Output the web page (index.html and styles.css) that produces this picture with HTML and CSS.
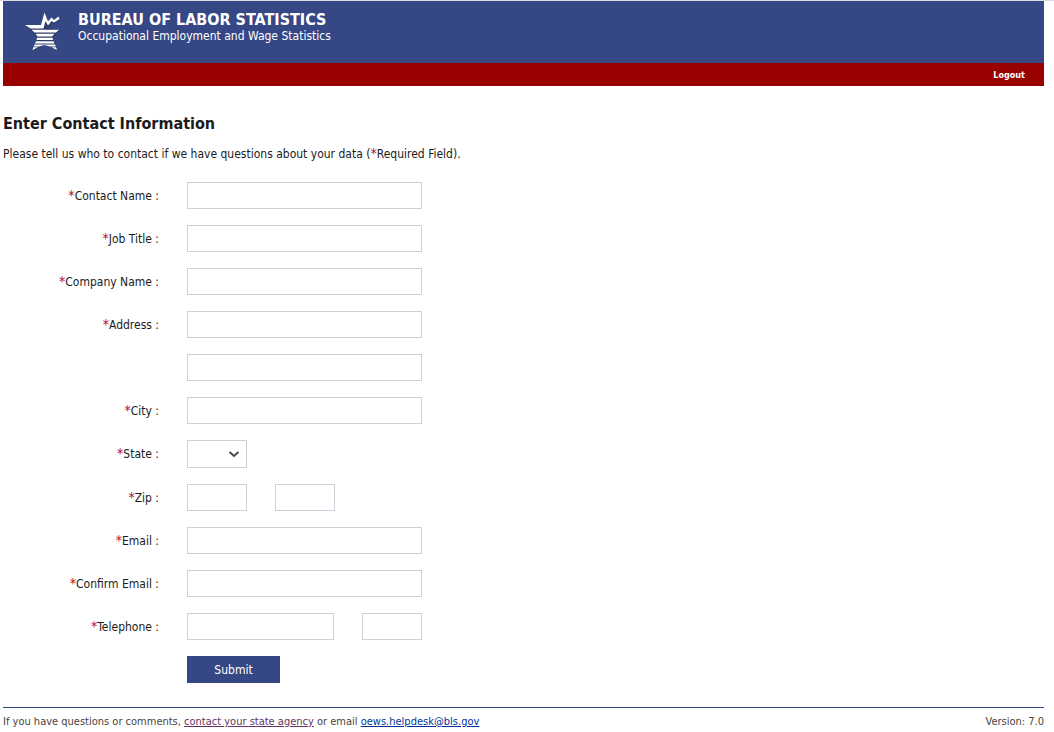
FILE: index.html
```html
<!DOCTYPE html>
<html lang="en">
<head>
  <meta charset="UTF-8">
  <title>Enter Contact Information</title>
  <link rel="stylesheet" href="styles.css">
</head>
<body>
  <header>
    <div class="banner">
      <svg class="logo" width="54" height="54" viewBox="0 0 54 54" aria-hidden="true">
        <path class="shadow" d="M10 22H26L29.500 10L33 19L36.500 15L39 18L44 14L38 20L35.500 19L33 24L44 27L36 34L42 47L30 40L18 47L21.500 34Z"/>
        <path class="star" d="M9 21H25L28.500 8.500L32 17.500L35.500 13.500L38 16L42.500 12.500L43.500 15L38 18.500L35.500 17L32 21.500L29.500 17L27.500 24.500H14.500Z"/>
        <path class="star" d="M15.500 25.800H43L40 28.500H18.500ZM19.500 29.800H38.500L36 32.500H21.500ZM21 33.800H36.500L37 36H20.500ZM20 37.200H37.500L38.500 39.500H19ZM18.500 40.500H39L39.800 42.500H34L28.500 41L23 42.500H17.800ZM17.300 43.200H22L16.500 46ZM35.500 43.200H40L41 46Z"/>
      </svg>
      <div class="brand">
        <div class="agency">BUREAU OF LABOR STATISTICS</div>
        <div class="program">Occupational Employment and Wage Statistics</div>
      </div>
    </div>
    <nav>
      <a href="#">Logout</a>
    </nav>
  </header>

  <main>
    <h1>Enter Contact Information</h1>
    <p class="intro">Please tell us who to contact if we have questions about your data (<span class="req">*</span>Required Field).</p>

    <form>
      <div class="row">
        <label for="contact"><span class="req">*</span>Contact Name :</label>
        <input type="text" id="contact">
      </div>
      <div class="row">
        <label for="job"><span class="req">*</span>Job Title :</label>
        <input type="text" id="job">
      </div>
      <div class="row">
        <label for="company"><span class="req">*</span>Company Name :</label>
        <input type="text" id="company">
      </div>
      <div class="row">
        <label for="address1"><span class="req">*</span>Address :</label>
        <input type="text" id="address1">
      </div>
      <div class="row">
        <span class="spacer"></span>
        <input type="text" id="address2" aria-label="Address line 2">
      </div>
      <div class="row">
        <label for="city"><span class="req">*</span>City :</label>
        <input type="text" id="city">
      </div>
      <div class="row">
        <label for="state"><span class="req">*</span>State :</label>
        <div class="select-wrap">
          <select id="state" class="short"><option></option></select>
          <svg class="arrow" width="12" height="8" viewBox="0 0 12 8" aria-hidden="true"><path d="M1.500 2L6 6L10.500 2"/></svg>
        </div>
      </div>
      <div class="row">
        <label for="zip"><span class="req">*</span>Zip :</label>
        <input type="text" id="zip" class="short">
        <input type="text" id="zip4" class="short" aria-label="Zip plus 4">
      </div>
      <div class="row">
        <label for="email"><span class="req">*</span>Email :</label>
        <input type="email" id="email">
      </div>
      <div class="row">
        <label for="email2"><span class="req">*</span>Confirm Email :</label>
        <input type="email" id="email2">
      </div>
      <div class="row">
        <label for="phone"><span class="req">*</span>Telephone :</label>
        <input type="tel" id="phone" class="medium">
        <input type="text" id="ext" class="short" aria-label="Extension">
      </div>
      <div class="row">
        <span class="spacer"></span>
        <button type="submit">Submit</button>
      </div>
    </form>
  </main>

  <footer>
    <div>If you have questions or comments, <a class="visited" href="#">contact your state agency</a> or email <a href="mailto:oews.helpdesk@bls.gov">oews.helpdesk@bls.gov</a></div>
    <div>Version: 7.0</div>
  </footer>
</body>
</html>
```
FILE: styles.css
```css
html {
  border-top: 1px solid #dadce0;
}

body {
  margin: 0 10px 0 3px;
  font-family: Tahoma, "DejaVu Sans Condensed", "Noto Sans", sans-serif;
  font-size: 12px;
  line-height: 16px;
  color: #1b1b1b;
  background-color: white;
}

.banner {
  display: flex;
  height: 62px;
  padding-left: 13px;
  box-sizing: border-box;
  background-color: #364785;
  color: white;
}

.logo {
  margin-top: 3px;
}

.star {
  fill: white;
}

.shadow {
  fill: #2b3658;
  opacity: 0.6;
}

.brand {
  padding: 11px 0 0 8px;
}

.agency {
  font-size: 16px;
  font-weight: bold;
}

nav {
  display: flex;
  justify-content: flex-end;
  align-items: center;
  height: 23px;
  padding-right: 19px;
  background-color: #990000;
}

nav a {
  color: white;
  font-size: 9px;
  font-weight: bold;
  text-decoration: none;
}

h1 {
  margin: 28px 0 12px;
  font-size: 16px;
  line-height: 20px;
}

.intro {
  margin: 0 0 20px;
}

.req {
  color: #b50920;
  font-size: 14px;
  line-height: 1;
}

form {
  display: flex;
  flex-direction: column;
  gap: 16px;
}

.row {
  display: flex;
  align-items: center;
  gap: 28px;
}

label,
.spacer {
  width: 156px;
  text-align: right;
}

input,
select {
  box-sizing: border-box;
  width: 235px;
  height: 27px;
  padding: 4px;
  border: 1px solid #cdd0d9;
  border-radius: 0;
  background-color: white;
  font: inherit;
}

.short {
  width: 60px;
}

.medium {
  width: 147px;
}

.select-wrap {
  position: relative;
  display: flex;
}

select {
  height: 28px;
  appearance: none;
}

.arrow {
  position: absolute;
  right: 7px;
  top: 10px;
  fill: none;
  stroke: #45484f;
  stroke-width: 2;
  pointer-events: none;
}

button {
  width: 93px;
  height: 27px;
  padding: 0;
  border: 0;
  background-color: #364785;
  color: white;
  font: inherit;
  cursor: pointer;
}

footer {
  display: flex;
  justify-content: space-between;
  margin-top: 24px;
  padding-top: 6px;
  border-top: 1px solid #364785;
  color: #494440;
  font-size: 11px;
}

footer a {
  color: #003399;
}

footer .visited {
  color: #663366;
}
```
